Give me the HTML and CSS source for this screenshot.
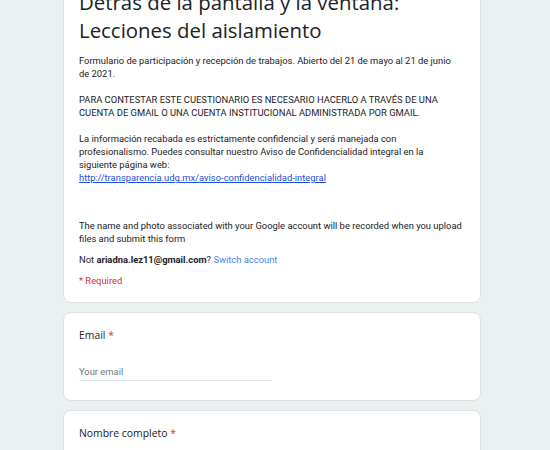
FILE: index.html
```html
<!DOCTYPE html>
<html lang="es">
<head>
<meta charset="utf-8">
<title>Detrás de la pantalla y la ventana</title>
<link rel="stylesheet" href="styles.css">
</head>
<body>
<main class="form">
  <section class="card header-card">
    <h1 class="form-title">Detrás de la pantalla y la ventana: Lecciones del aislamiento</h1>
    <div class="description">
      <p>Formulario de participación y recepción de trabajos. Abierto del 21 de mayo al 21 de junio de 2021.</p>
      <p>PARA CONTESTAR ESTE CUESTIONARIO ES NECESARIO HACERLO A TRAVÉS DE UNA CUENTA DE GMAIL O UNA CUENTA INSTITUCIONAL ADMINISTRADA POR GMAIL.</p>
      <p>La información recabada es estrictamente confidencial y será manejada con profesionalismo. Puedes consultar nuestro Aviso de Confidencialidad integral en la siguiente página web:<br><a class="url" href="#">http://transparencia.udg.mx/aviso-confidencialidad-integral</a></p>
    </div>
    <p class="notice">The name and photo associated with your Google account will be recorded when you upload files and submit this form</p>
    <p class="account">Not <b>ariadna.lez11@gmail.com</b>? <a class="switch" href="#">Switch account</a></p>
    <p class="required-note">* Required</p>
  </section>

  <section class="card question">
    <div class="q-title">Email <span class="star">*</span></div>
    <div class="field"><span class="placeholder">Your email</span></div>
  </section>

  <section class="card question">
    <div class="q-title">Nombre completo <span class="star">*</span></div>
    <div class="field"><span class="placeholder">Your answer</span></div>
  </section>
</main>
</body>
</html>
```

FILE: styles.css
```css
html, body {
  margin: 0;
  padding: 0;
  background: #ebf0f1;
  overflow: hidden;
}

body {
  font-family: Roboto, "Liberation Sans", sans-serif;
  color: #202124;
}

.form {
  width: 418px;
  margin-left: 63px;
  margin-top: -40px;
  display: flex;
  flex-direction: column;
  gap: 9px;
}

.card {
  background: #fff;
  border: 1px solid #dde1e3;
  border-radius: 8px;
  padding: 0 15px;
}

.header-card {
  padding-top: 27px;
  padding-bottom: 15px;
}

.form-title {
  margin: 0;
  font-family: "Open Sans", Roboto, sans-serif;
  font-weight: 400;
  font-size: 20.4px;
  line-height: 28px;
  color: #202124;
}

.description {
  margin-top: 10px;
  padding-right: 5px;
  font-size: 9.4px;
  line-height: 13px;
}

.description p {
  margin: 0 0 13px;
}

.description p:last-child {
  margin-bottom: 0;
}

.url {
  color: #1a4fd8;
  text-decoration: underline;
}

.notice {
  margin: 35px 0 0;
  font-size: 9.4px;
  line-height: 13px;
}

.account {
  margin: 8px 0 0;
  font-size: 9.4px;
  line-height: 13px;
}

.account b {
  font-weight: 700;
}

.switch {
  color: #4285f4;
  text-decoration: none;
}

.required-note {
  margin: 8px 0 0;
  font-size: 9.4px;
  line-height: 13px;
  color: #d93025;
}

.question {
  padding-top: 15px;
  padding-bottom: 19px;
}

.q-title {
  font-family: "Open Sans", Roboto, sans-serif;
  font-size: 10.4px;
  line-height: 14px;
  color: #202124;
}

.star {
  color: #d93025;
}

.field {
  margin-top: 21px;
  width: 193px;
  height: 17px;
  border-bottom: 1px solid #e3e6e8;
  display: flex;
  align-items: center;
}

.placeholder {
  font-size: 9.4px;
  color: #70757a;
}
```
